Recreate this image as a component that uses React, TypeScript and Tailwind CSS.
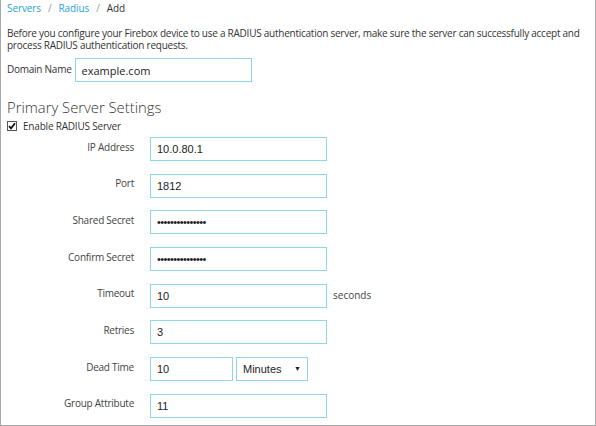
import React from "react";

const inputCls =
  "h-[24px] border border-[#8fd7e6] bg-white px-[6px] text-[11px] text-[#222] outline-none [font-family:'Liberation_Sans',Arial,sans-serif]";

function Row({ label, children }: { label: string; children: React.ReactNode }) {
  return (
    <div className="flex items-center">
      <div className="w-[134px] pr-[1px] text-right text-[10px] tracking-[-0.25px] text-[#444] -mt-[4px]">{label}</div>
      <div className="ml-[15px] flex items-center">{children}</div>
    </div>
  );
}

export default function App() {
  return (
    <div className="w-[596px] h-[426px] bg-white border-l border-r border-b border-[#a8a8a8] text-[#333] [font-family:'Open_Sans',sans-serif] overflow-hidden">
      <div className="pl-[6px] pt-[1px] leading-[14px] text-[10px] tracking-[-0.1px] flex gap-[7px]">
        <span className="text-[#29a3d4]">Servers</span>
        <span className="text-[#999]">/</span>
        <span className="text-[#29a3d4]">Radius</span>
        <span className="text-[#999]">/</span>
        <span className="text-[#333]">Add</span>
      </div>
      <p className="mt-[12px] pl-[6px] pr-[2px] text-[10px] tracking-[-0.25px] leading-[12px] text-[#333]">
        Before you configure your Firebox device to use a RADIUS authentication server, make sure the server can successfully accept and process RADIUS authentication requests.
      </p>
      <div className="mt-[7px] pl-[6px] flex items-center">
        <span className="text-[10px] tracking-[-0.25px] text-[#333] -mt-[2px]">Domain Name</span>
        <input readOnly defaultValue="example.com" className={inputCls + " ml-[3px] w-[177px] text-[10.5px] [font-family:'Open_Sans',sans-serif]"} />
      </div>
      <h2 className="mt-[15px] pl-[6px] text-[14.8px] leading-[20px] font-light text-[#333]">Primary Server Settings</h2>
      <div className="mt-[2px] pl-[6px] flex items-center leading-[14px]">
        <span className="w-[10px] h-[10px] border border-[#555] bg-white flex items-center justify-center">
          <svg width="8" height="8" viewBox="0 0 8 8">
            <path d="M1 4.2 L3 6.4 L7 1.2" stroke="#111" strokeWidth="1.8" fill="none" />
          </svg>
        </span>
        <span className="ml-[6px] text-[10px] tracking-[-0.2px] text-[#333]">Enable RADIUS Server</span>
      </div>
      <div className="mt-[4px] flex flex-col gap-[12.7px]">
        <Row label="IP Address">
          <input readOnly defaultValue="10.0.80.1" className={inputCls + " w-[177px]"} />
        </Row>
        <Row label="Port">
          <input readOnly defaultValue="1812" className={inputCls + " w-[177px]"} />
        </Row>
        <Row label="Shared Secret">
          <input readOnly type="password" defaultValue="abcdefghijklmno" className={inputCls + " w-[177px] text-[7.5px] tracking-[-0.6px]"} />
        </Row>
        <Row label="Confirm Secret">
          <input readOnly type="password" defaultValue="abcdefghijklmno" className={inputCls + " w-[177px] text-[7.5px] tracking-[-0.6px]"} />
        </Row>
        <Row label="Timeout">
          <input readOnly defaultValue="10" className={inputCls + " w-[177px]"} />
          <span className="ml-[6px] text-[10px] text-[#444]">seconds</span>
        </Row>
        <Row label="Retries">
          <input readOnly defaultValue="3" className={inputCls + " w-[177px]"} />
        </Row>
        <Row label="Dead Time">
          <input readOnly defaultValue="10" className={inputCls + " w-[83px]"} />
          <div className={inputCls + " ml-[3px] w-[72px] flex items-center justify-between pr-[6px]"}>
            <span>Minutes</span>
            <span className="text-[7px] text-[#222]">▼</span>
          </div>
        </Row>
        <Row label="Group Attribute">
          <input readOnly defaultValue="11" className={inputCls + " w-[177px]"} />
        </Row>
      </div>
    </div>
  );
}
